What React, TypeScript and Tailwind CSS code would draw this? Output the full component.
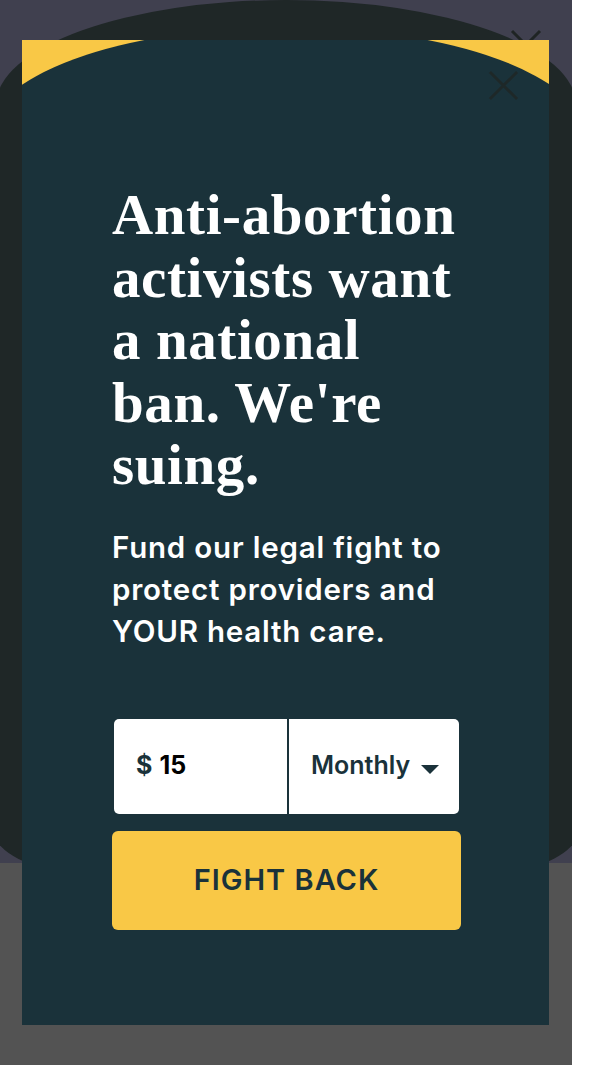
const CloseIcon = ({ className }: { className: string }) => (
  <svg viewBox="0 0 32 32" className={className} fill="none" stroke="currentColor" strokeWidth="3">
    <path d="M2 2 L30 30 M30 2 L2 30" />
  </svg>
)

const App = (): JSX.Element => {
  return (
    <div className="w-[600px] h-[1065px] bg-white flex">
      <div className="relative w-[572px] h-full overflow-hidden flex flex-col">
        <div className="h-[863px] bg-[#40404f]" />
        {/* dark blob behind the modal */}
        <div className="absolute left-[-4px] top-0 w-[580px] h-[897px] bg-[#1f2727] rounded-[50%_50%_50%_50%/105px_105px_62px_62px]" />
        <div className="relative z-10 flex-1 bg-[#535353]" />

        <CloseIcon className="absolute z-10 left-[510px] top-[29px] w-[32px] h-[32px] text-[#1f2424]" />

        <div className="absolute z-20 left-[22px] top-[40px] w-[527px] h-[985px] bg-[#f9c846] overflow-hidden">
          <div className="absolute left-[-36px] top-[-13px] w-[600px] h-[1100px] bg-[#1a323a] rounded-tl-[300px_110px] rounded-tr-[300px_110px]" />
          <CloseIcon className="absolute z-10 left-[466px] top-[30px] w-[31px] h-[31px] text-[#1e2828]" />

          <div className="relative flex flex-col pl-[90px] pr-[88px] pt-[144px]">
            <h1
              className="text-white font-bold text-[57px] leading-[62.5px] tracking-[0.6px]"
              style={{ fontFamily: '"Liberation Serif", serif' }}
            >
              Anti-abortion
              <br />
              activists want
              <br />
              a national
              <br />
              ban. We're
              <br />
              suing.
            </h1>
            <p
              className="mt-[29px] text-white font-semibold text-[29.5px] leading-[42px] tracking-[0.8px]"
              style={{ fontFamily: 'Inter, "Liberation Sans", sans-serif' }}
            >
              Fund our legal fight to
              <br />
              protect providers and
              <br />
              YOUR health care.
            </p>

            <div
              className="mt-[67px] mx-[2px] h-[95px] flex gap-[2px]"
              style={{ fontFamily: 'Inter, "Liberation Sans", sans-serif' }}
            >
              <div className="w-[173px] bg-white rounded-l-[5px] flex items-center pl-[22px] text-[25px] font-bold">
                <span className="text-[#1a323a]">$</span>
                <span className="ml-[7px] text-black">15</span>
              </div>
              <div className="flex-1 bg-white rounded-r-[5px] flex items-center pl-[22px] text-[25px] font-semibold text-[#1a323a]">
                <span>Monthly</span>
                <svg viewBox="0 0 18 9" className="ml-[11px] mt-[6px] w-[18px] h-[9px]" fill="#1a323a">
                  <path d="M0 0 L18 0 L9 9 Z" />
                </svg>
              </div>
            </div>

            <button
              className="mt-[17px] h-[99px] bg-[#f9c846] rounded-[6px] text-[#1a323a] text-[29px] font-semibold tracking-[1px]"
              style={{ fontFamily: 'Inter, "Liberation Sans", sans-serif' }}
            >
              FIGHT BACK
            </button>
          </div>
        </div>
      </div>
    </div>
  )
}

export default App
